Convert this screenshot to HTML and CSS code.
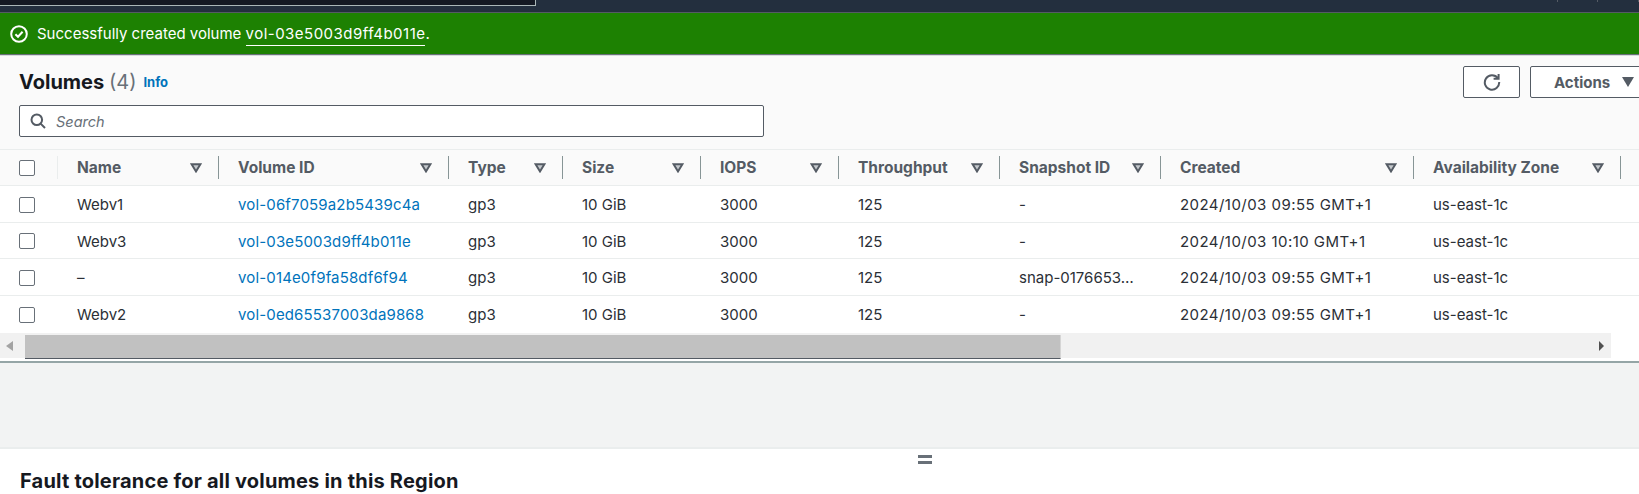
FILE: index.html
```html
<!DOCTYPE html>
<html lang="en">
<head>
    <meta charset="UTF-8">
    <title>Volumes</title>
    <link rel="stylesheet" href="styles.css">
</head>
<body>

<svg class="defs" width="0" height="0"><symbol id="sort" viewBox="0 0 12 10"><path d="M1.6 1.2h8.8L6 8.4z" fill="#c4c8cc" stroke="#545b64" stroke-width="2"/></symbol></svg>

<div class="topnav">
    <div class="topnav-box"></div>
    <div class="topnav-seps"><span></span><span></span><span></span></div>
</div>

<div class="flash">
    <svg class="flash-icon" width="18" height="18" viewBox="0 0 18 18"><circle cx="9" cy="9" r="7.8" fill="none" stroke="#fff" stroke-width="2"/><path d="M5.4 9.2l2.6 2.6 4.6-5" fill="none" stroke="#fff" stroke-width="2"/></svg>
    <span>Successfully created volume <a class="flash-link">vol-03e5003d9ff4b011e</a>.</span>
</div>

<div class="panel">
    <div class="panel-head">
        <div class="head-left">
            <div class="title-row">
                <h1>Volumes <span class="count">(4)</span></h1>
                <a class="info">Info</a>
            </div>
            <div class="search">
                <svg width="16" height="16" viewBox="0 0 16 16"><circle cx="6.8" cy="6.8" r="5.3" fill="none" stroke="#545b64" stroke-width="2"/><path d="M10.6 10.6L15 15" stroke="#545b64" stroke-width="2"/></svg>
                <span>Search</span>
            </div>
        </div>
        <div class="actions">
            <button class="btn btn-refresh">
                <svg width="18" height="18" viewBox="0 0 18 18"><path d="M14.8 5.2A7.2 7.2 0 1 0 16.2 9" fill="none" stroke="#545b64" stroke-width="2"/><path d="M10.6 5.8h5V1" fill="none" stroke="#545b64" stroke-width="2"/></svg>
            </button>
            <button class="btn btn-actions">Actions <i class="caret"></i></button>
        </div>
    </div>

    <div class="table">
        <div class="row row-head">
            <div class="cell c-check"><i class="check"></i></div>
            <div class="cell c-name"><b>Name</b><svg class="sort"><use href="#sort"/></svg></div>
            <div class="cell c-vol"><b>Volume ID</b><svg class="sort"><use href="#sort"/></svg></div>
            <div class="cell c-type"><b>Type</b><svg class="sort"><use href="#sort"/></svg></div>
            <div class="cell c-size"><b>Size</b><svg class="sort"><use href="#sort"/></svg></div>
            <div class="cell c-iops"><b>IOPS</b><svg class="sort"><use href="#sort"/></svg></div>
            <div class="cell c-thr"><b>Throughput</b><svg class="sort"><use href="#sort"/></svg></div>
            <div class="cell c-snap"><b>Snapshot ID</b><svg class="sort"><use href="#sort"/></svg></div>
            <div class="cell c-created"><b>Created</b><svg class="sort"><use href="#sort"/></svg></div>
            <div class="cell c-zone"><b>Availability Zone</b><svg class="sort"><use href="#sort"/></svg></div>
        </div>
        <div class="row">
            <div class="cell c-check"><i class="check"></i></div>
            <div class="cell c-name">Webv1</div>
            <div class="cell c-vol"><a>vol-06f7059a2b5439c4a</a></div>
            <div class="cell c-type">gp3</div>
            <div class="cell c-size">10 GiB</div>
            <div class="cell c-iops">3000</div>
            <div class="cell c-thr">125</div>
            <div class="cell c-snap">-</div>
            <div class="cell c-created">2024/10/03 09:55 GMT+1</div>
            <div class="cell c-zone">us-east-1c</div>
        </div>
        <div class="row">
            <div class="cell c-check"><i class="check"></i></div>
            <div class="cell c-name">Webv3</div>
            <div class="cell c-vol"><a>vol-03e5003d9ff4b011e</a></div>
            <div class="cell c-type">gp3</div>
            <div class="cell c-size">10 GiB</div>
            <div class="cell c-iops">3000</div>
            <div class="cell c-thr">125</div>
            <div class="cell c-snap">-</div>
            <div class="cell c-created">2024/10/03 10:10 GMT+1</div>
            <div class="cell c-zone">us-east-1c</div>
        </div>
        <div class="row">
            <div class="cell c-check"><i class="check"></i></div>
            <div class="cell c-name">–</div>
            <div class="cell c-vol"><a>vol-014e0f9fa58df6f94</a></div>
            <div class="cell c-type">gp3</div>
            <div class="cell c-size">10 GiB</div>
            <div class="cell c-iops">3000</div>
            <div class="cell c-thr">125</div>
            <div class="cell c-snap">snap-0176653…</div>
            <div class="cell c-created">2024/10/03 09:55 GMT+1</div>
            <div class="cell c-zone">us-east-1c</div>
        </div>
        <div class="row">
            <div class="cell c-check"><i class="check"></i></div>
            <div class="cell c-name">Webv2</div>
            <div class="cell c-vol"><a>vol-0ed65537003da9868</a></div>
            <div class="cell c-type">gp3</div>
            <div class="cell c-size">10 GiB</div>
            <div class="cell c-iops">3000</div>
            <div class="cell c-thr">125</div>
            <div class="cell c-snap">-</div>
            <div class="cell c-created">2024/10/03 09:55 GMT+1</div>
            <div class="cell c-zone">us-east-1c</div>
        </div>
    </div>

    <div class="scrollbar">
        <div class="sb-arrow"><i class="arrow-left"></i></div>
        <div class="sb-track">
            <div class="sb-thumb"></div>
            <div class="sb-right"><i class="arrow-right"></i></div>
        </div>
    </div>
</div>

<div class="gap"></div>

<div class="bottom">
    <div class="handle"></div>
    <h2>Fault tolerance for all volumes in this Region</h2>
</div>

</body>
</html>
```

FILE: styles.css
```css
*{
    margin: 0;
    padding: 0;
    box-sizing: border-box;
}
html, body{
    height: 494px;
    overflow: hidden;
}
body{
    font-family: Inter, "Noto Sans", sans-serif;
    font-size: 15px;
    color: #2b2f36;
    background: #fff;
}
a{
    text-decoration: none;
}
i{
    display: block;
}
.defs{
    position: absolute;
}

.topnav{
    height: 13px;
    background: #232f3e;
    border-bottom: 1px solid #545b64;
    display: flex;
    justify-content: space-between;
}
.topnav-box{
    width: 538px;
    height: 6px;
    margin-left: -2px;
    background: #141923;
    border: 1px solid #aab7b8;
    border-top: 0;
}
.topnav-seps{
    display: flex;
    width: 122px;
}
.topnav-seps span{
    width: 56px;
    height: 2px;
    border-right: 1px solid #545b64;
}

.flash{
    height: 42px;
    background: #1d8102;
    border-bottom: 1px solid #687078;
    color: #fff;
    display: flex;
    align-items: center;
    padding-left: 10px;
    gap: 9px;
}
.flash-link{
    color: #fff;
    border-bottom: 1px solid #fff;
    padding-bottom: 2px;
    letter-spacing: 0.48px;
}

.panel{
    background: #fafafa;
    height: 306px;
    border-top: 1px solid #d5dbdb;
}
.panel-head{
    height: 93px;
    padding: 13px 0 0 19px;
    display: flex;
    justify-content: space-between;
}
h1{
    font-size: 20px;
    font-weight: 700;
    line-height: 26px;
    color: #16191f;
}
.count{
    font-weight: 400;
    color: #687078;
}
.title-row{
    display: flex;
    align-items: center;
    gap: 7px;
}
.info{
    color: #0073bb;
    font-size: 13px;
    font-weight: 700;
}
.search{
    width: 745px;
    height: 32px;
    margin-top: 10px;
    background: #fff;
    border: 1px solid #545b64;
    border-radius: 2px;
    display: flex;
    align-items: center;
    padding-left: 10px;
    gap: 10px;
    color: #687078;
    font-size: 14.5px;
    font-style: italic;
}
.actions{
    display: flex;
    gap: 10px;
    margin-top: -3px;
    height: 32px;
    margin-right: -11px;
}
.btn{
    height: 32px;
    background: #fff;
    border: 1px solid #545b64;
    border-radius: 2px;
    font: inherit;
    font-weight: 700;
    color: #545b64;
}
.btn-refresh{
    width: 57px;
    display: flex;
    align-items: center;
    justify-content: center;
}
.btn-actions{
    width: 120px;
    display: flex;
    align-items: center;
    padding-left: 23px;
    gap: 12px;
}
.caret{
    width: 0;
    height: 0;
    border-left: 6px solid transparent;
    border-right: 6px solid transparent;
    border-top: 10px solid #545b64;
}

.table{
    border-top: 1px solid #eaeded;
}
.row{
    display: flex;
    height: 36.5px;
    padding-top: 2px;
    align-items: center;
    background: #fff;
    border-bottom: 1px solid #eaeded;
}
.row:last-child{
    border-bottom: 0;
}
.row-head{
    height: 36px;
    padding-top: 0;
    background: #fafafa;
    color: #545b64;
}
.cell{
    height: 100%;
    display: flex;
    align-items: center;
    flex: none;
    padding-left: 19px;
    padding-right: 17px;
    white-space: nowrap;
}
.row-head .cell{
    justify-content: space-between;
    position: relative;
}
.row-head .cell b{
    font-size: 15.5px;
    font-weight: 700;
    letter-spacing: 0;
}
.row-head .cell::after{
    content: "";
    position: absolute;
    right: 0;
    top: 6px;
    height: 23px;
    width: 1px;
    background: #879596;
}
.row-head .c-check::after{
    background: #eaeded;
}
.c-check{ width: 58px; }
.c-name{ width: 161px; }
.c-vol{ width: 230px; }
.c-type{ width: 114px; }
.c-size{ width: 138px; }
.c-iops{ width: 138px; }
.c-thr{ width: 161px; }
.c-snap{ width: 161px; }
.c-created{ width: 253px; letter-spacing: 0.45px; }
.c-zone{ width: 207px; }
.c-vol a{
    color: #0073bb;
    letter-spacing: 0.15px;
}
.check{
    width: 16px;
    height: 16px;
    background: #fff;
    border: 1px solid #687078;
    border-radius: 2px;
}
.sort{
    width: 12px;
    height: 10px;
    flex: none;
}

.scrollbar{
    height: 29px;
    padding-top: 1px;
    display: flex;
    background: #fff;
}
.sb-arrow{
    width: 25px;
    height: 25px;
    background: #f1f1f1;
    display: flex;
    align-items: center;
    padding-left: 6px;
}
.sb-track{
    width: 1586px;
    height: 25px;
    background: #f1f1f1;
    display: flex;
    justify-content: space-between;
    align-items: flex-start;
}
.sb-thumb{
    width: 1036px;
    height: 24px;
    margin-top: 2px;
    background: #c1c1c1;
    border-bottom: 1px solid #545b64;
    border-right: 1px solid #d5d5d5;
}
.sb-right{
    padding: 8px 7px 0 0;
}
.arrow-left{
    width: 0;
    height: 0;
    border-top: 5px solid transparent;
    border-bottom: 5px solid transparent;
    border-right: 7px solid #a3a3a3;
}
.arrow-right{
    width: 0;
    height: 0;
    border-top: 5px solid transparent;
    border-bottom: 5px solid transparent;
    border-left: 5px solid #505050;
}

.gap{
    height: 86px;
    background: #f2f3f3;
    border-top: 2px solid #95a5a6;
}
.bottom{
    position: relative;
    border-top: 2px solid #eaeded;
    background: #fff;
    padding: 19px 0 0 20px;
}
.handle{
    position: absolute;
    left: 918px;
    top: 6px;
    width: 14px;
    height: 9px;
    border-top: 3px solid #687078;
    border-bottom: 3px solid #687078;
}
h2{
    font-size: 20px;
    font-weight: 700;
    line-height: 26px;
    letter-spacing: 0.2px;
    color: #16191f;
}
```
